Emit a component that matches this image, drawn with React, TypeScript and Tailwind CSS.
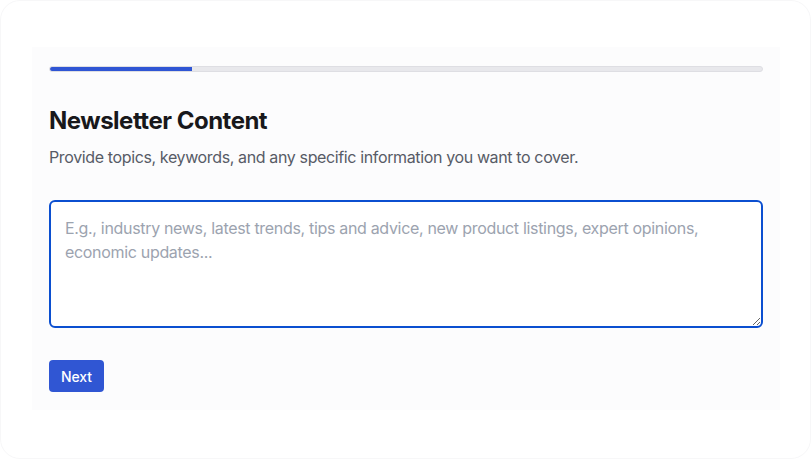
import React from "react";

export default function App() {
  return (
    <div
      className="w-[811px] h-[459px] bg-white"
      style={{ fontFamily: "Inter, 'Noto Sans', sans-serif" }}
    >
      <div className="w-full h-full rounded-[20px] border border-[#f7f7f8] bg-white pt-[46px] px-[31px]">
        <div className="w-[748px] bg-[#fcfcfd] px-[17px] pt-[19px] pb-[18px]">
          <div className="relative h-[6px] w-full rounded-full bg-[#e8e8ec] border border-[#dedee3] overflow-hidden">
            <div className="absolute left-0 top-[-1px] h-[6px] w-[20%] rounded-l-full bg-[#2f55d4]" />
          </div>
          <h1 className="mt-[34px] text-[24px] leading-[30px] font-bold text-[#18181b] tracking-[-0.5px]">
            Newsletter Content
          </h1>
          <p className="mt-[9px] text-[16px] leading-[24px] text-[#575b66] tracking-[-0.37px]">
            Provide topics, keywords, and any specific information you want to cover.
          </p>
          <textarea
            autoFocus
            className="mt-[31px] block w-[714px] h-[128px] rounded-[6px] border-2 border-[#0b4fd0] bg-white px-[14px] py-[14px] text-[16px] leading-[24px] tracking-[-0.32px] text-[#18181b] placeholder:text-[#9ca3af] outline-none"
            style={{ fontFamily: "Inter, 'Noto Sans', sans-serif" }}
            placeholder="E.g., industry news, latest trends, tips and advice, new product listings, expert opinions, economic updates..."
          />
          <button className="mt-[32px] h-[32px] w-[55px] rounded-[4px] bg-[#3056d3] text-white text-[14px] font-medium tracking-[-0.1px]">
            Next
          </button>
        </div>
      </div>
    </div>
  );
}
